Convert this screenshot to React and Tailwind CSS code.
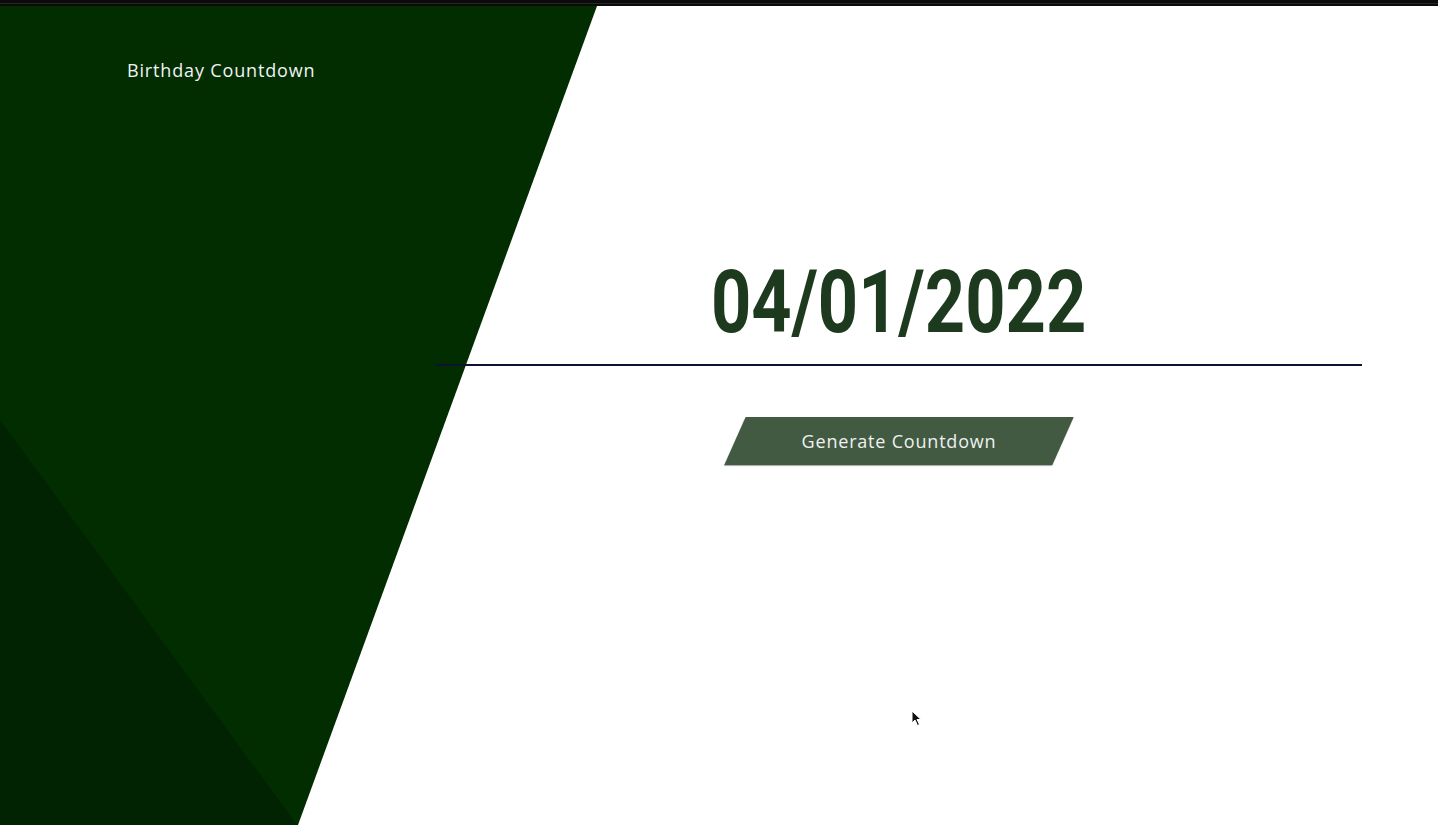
export default function App() {
  return (
    <div className="w-[1438px] h-[825px] overflow-hidden bg-white flex flex-col" style={{ fontFamily: "'Open Sans', Lato, sans-serif" }}>
      <div className="h-[6px] bg-[#0b0b0b] flex flex-col justify-center">
        <div className="h-[1px] bg-[#262626]" />
      </div>
      <div className="relative flex-1">
        <svg className="absolute inset-0" width="1438" height="819" viewBox="0 0 1438 819">
          <polygon points="0,0 597,0 298,819 0,819" fill="#012d01" />
          <polygon points="0,414 297,819 0,819" fill="#012301" />
        </svg>
        <svg className="absolute left-[911px] top-[704px]" width="12" height="18" viewBox="0 0 12 18">
          <path d="M1 1 L1 13 L4 10 L6.5 15.5 L8.5 14.5 L6 9.5 L10 9.5 Z" fill="#111" stroke="#fff" strokeWidth="1" />
        </svg>
        <div className="relative flex flex-col">
          <div className="pl-[127px] pt-[53px] text-[18px] leading-[22px] text-[#f2f2f2] tracking-[0.85px]">Birthday Countdown</div>
          <div className="ml-[436px] w-[926px] flex flex-col items-center">
            <div className="mt-[177px] h-[88px] flex items-center justify-center">
              <div className="scale-x-[0.8] text-[88px] leading-none font-bold text-[#1e3a1e] whitespace-nowrap" style={{ fontFamily: "Roboto, sans-serif" }}>04/01/2022</div>
            </div>
            <div className="mt-[18px] w-full h-[2px] bg-[#0d1333]" />
            <div className="mt-[51px] relative w-[328px] h-[48px] flex items-center justify-center">
              <div className="absolute inset-0 -skew-x-[24deg] bg-[#425a42] shadow-[0_1px_1px_rgba(0,0,0,0.35)]" />
              <span className="relative text-[18px] text-[#f0f0f0] tracking-[0.8px]">Generate Countdown</span>
            </div>
          </div>
        </div>
      </div>
    </div>
  );
}
